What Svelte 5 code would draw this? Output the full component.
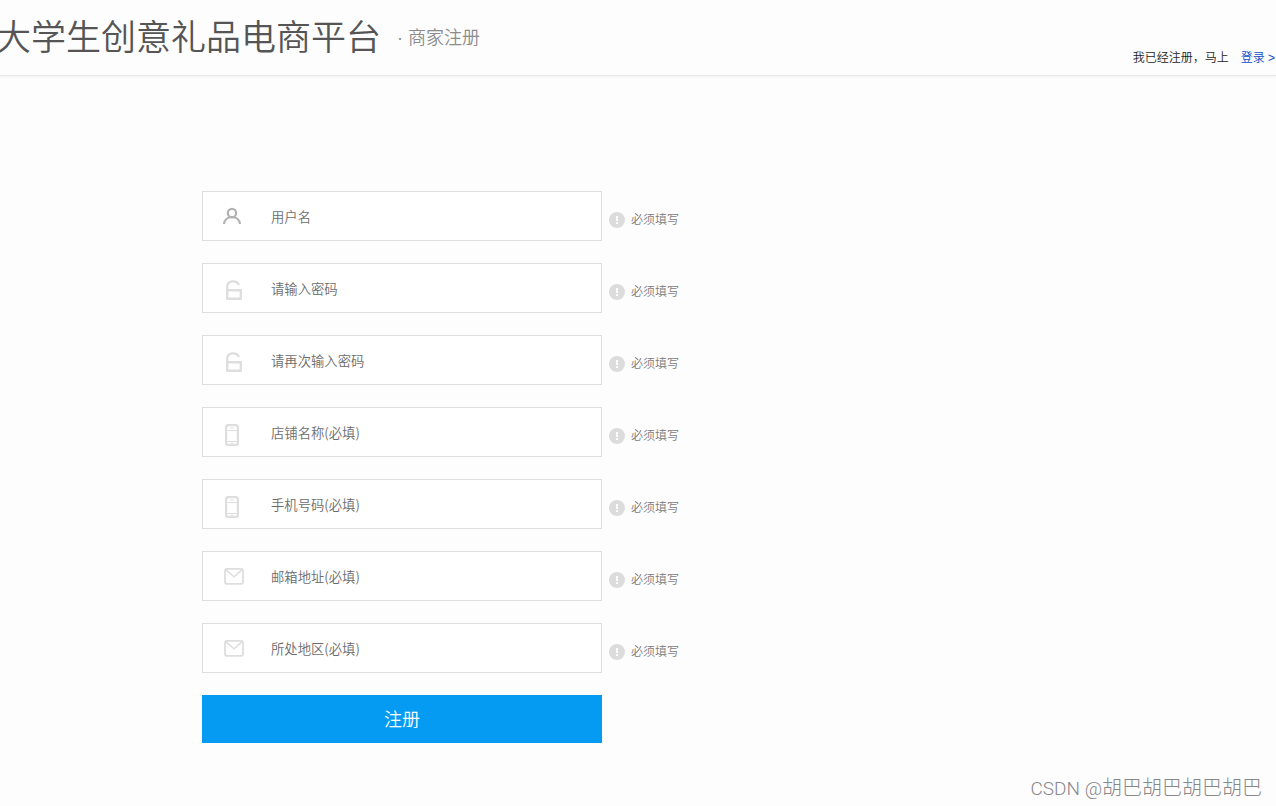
<script>
  const fields = [
    { id: 'username', label: '用户名', icon: 'user', type: 'text' },
    { id: 'password', label: '请输入密码', icon: 'lock', type: 'password' },
    { id: 'confirm', label: '请再次输入密码', icon: 'lock', type: 'password' },
    { id: 'shop', label: '店铺名称(必填)', icon: 'phone', type: 'text' },
    { id: 'mobile', label: '手机号码(必填)', icon: 'phone', type: 'tel' },
    { id: 'email', label: '邮箱地址(必填)', icon: 'mail', type: 'email' },
    { id: 'region', label: '所处地区(必填)', icon: 'mail', type: 'text' }
  ];
</script>

<header>
  <div class="brand">
    <h1>大学生创意礼品电商平台</h1>
    <h2>· 商家注册</h2>
  </div>
  <p class="login">我已经注册，马上<a href="#login">登录 &gt;</a></p>
</header>

<main>
  <form onsubmit={(e) => e.preventDefault()}>
    {#each fields as field}
      <div class="row">
        <div class="box">
          <label for={field.id} aria-label={field.label}>
            <svg width="24" height="24" viewBox="0 0 24 24" fill="none" aria-hidden="true">
              {#if field.icon === 'user'}
                <g stroke="#b2b2b2" stroke-width="2.2">
                  <circle cx="11" cy="7" r="4.2" />
                  <path d="M3 18C3.3 13.8 6.5 11.2 11 11.2S18.7 13.8 19 18" />
                </g>
              {:else if field.icon === 'lock'}
                <g stroke="#dedede" stroke-width="2.4" stroke-linejoin="round">
                  <rect x="6.2" y="12.2" width="13.6" height="8.6" />
                  <path d="M6.2 12.2V9C6.2 2.2 15.6 1.6 18 7" />
                </g>
              {:else if field.icon === 'phone'}
                <rect x="5.1" y="3.1" width="11.8" height="19.8" rx="2" stroke="#dedede" stroke-width="2.2" />
                <path d="M6 8.5H16M6 19.5H16M9 6H13M10 21.2H12" stroke="#dedede" />
              {:else}
                <rect x="4" y="2.9" width="18" height="15" rx="2" stroke="#dedede" stroke-width="1.8" />
                <path d="M5 3.8L13 10.8L21 3.8" stroke="#dedede" stroke-width="1.6" />
              {/if}
            </svg>
          </label>
          <input id={field.id} type={field.type} placeholder={field.label} />
        </div>
        <span class="hint">
          <svg width="16" height="16" viewBox="0 0 16 16" aria-hidden="true">
            <circle cx="8" cy="8" r="8" fill="#dcdcdc" />
            <path d="M7 4H9V9H7ZM7 10.2H9V12H7Z" fill="#fff" />
          </svg>
          必须填写
        </span>
      </div>
    {/each}
    <button type="submit">注册</button>
  </form>
</main>

<footer><span>CSDN @</span>胡巴胡巴胡巴胡巴</footer>

<style>
  :global(body) {
    background: #fdfdfd;
    font-family: "Liberation Sans", "Noto Sans CJK SC", sans-serif;
    font-weight: 350;
    color: #222;
    overflow-x: hidden;
  }

  header {
    display: flex;
    justify-content: space-between;
    height: 75px;
    border-bottom: 1px solid #e8e8e8;
    box-shadow: 0 1px 2px #f0f0f0;
  }

  .brand {
    display: flex;
    align-items: center;
    gap: 16px;
    margin-left: -4px;
  }

  h1,
  h2,
  p {
    margin: 0;
    font-weight: inherit;
    white-space: nowrap;
  }

  h1 {
    font-size: 35px;
    line-height: 50px;
    color: #555;
  }

  h2 {
    font-size: 18px;
    line-height: 26px;
    color: #8c8c8c;
  }

  .login {
    align-self: flex-end;
    padding: 0 1px 7px 0;
    font-size: 12px;
    line-height: 20px;
  }

  .login a {
    margin-left: 12px;
    color: #0a4cc8;
    text-decoration: none;
  }

  main {
    padding: 115px 0 22px 202px;
  }

  form {
    display: flex;
    flex-direction: column;
    gap: 22px;
  }

  .row {
    display: flex;
    gap: 7px;
  }

  .box {
    display: flex;
    box-sizing: border-box;
    width: 400px;
    height: 50px;
    border: 1px solid #ddd;
    background: #fff;
  }

  label {
    display: flex;
    align-items: center;
    padding: 3px 25px 0 18px;
  }

  input {
    flex: 1;
    min-width: 0;
    padding: 0 1px;
    border: 0;
    outline: 0;
    background: transparent;
    font-family: "Noto Sans CJK SC", sans-serif;
    font-weight: inherit;
  }

  input::placeholder {
    color: #6c6c6c;
  }

  .hint {
    display: flex;
    align-items: center;
    gap: 6px;
    padding-top: 7px;
    font-size: 12px;
    line-height: 18px;
    color: #7c7c7c;
  }

  button {
    width: 400px;
    height: 48px;
    padding: 0 0 2px;
    border: 0;
    background: #059bf2;
    color: #fff;
    font-family: inherit;
    font-size: 18px;
    font-weight: inherit;
    cursor: pointer;
  }

  footer {
    padding: 9px 14px 3px;
    text-align: right;
    font-family: Roboto, "Noto Sans CJK SC", sans-serif;
    font-size: 20px;
    font-weight: 300;
    line-height: 28px;
    color: #888;
  }

  footer span {
    font-size: 19px;
  }
</style>
